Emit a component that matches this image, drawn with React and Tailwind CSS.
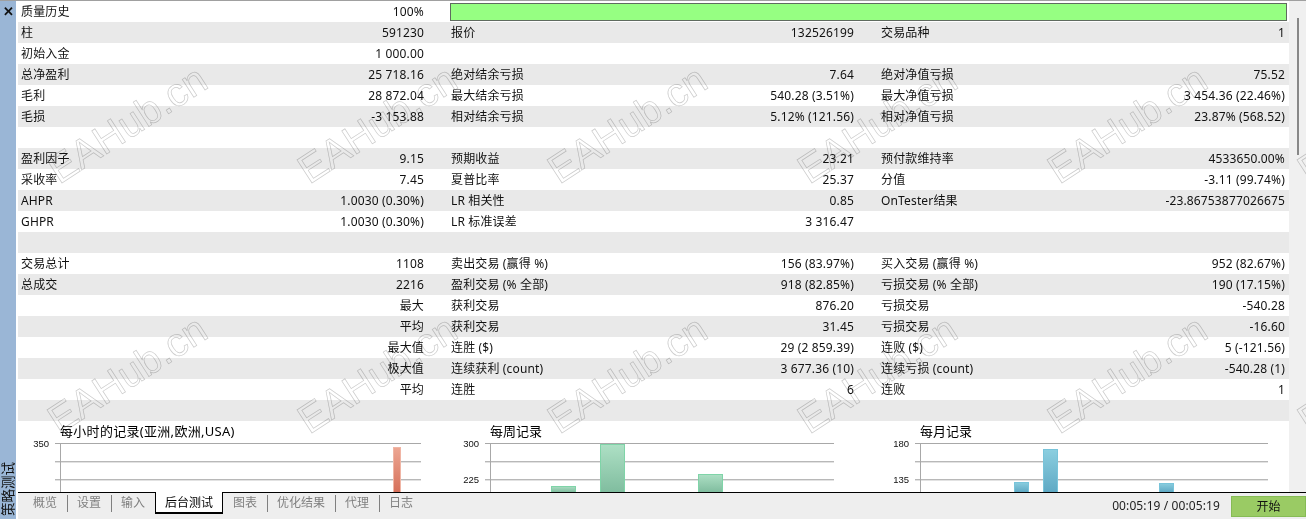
import React from "react";

const FONT = "font-['Noto_Sans','Noto_Sans_CJK_SC',sans-serif]";

// [label, value, label, value, label, value]
const rows = [
  ["质量历史", "100%", "__bar__", "", "", ""],
  ["柱", "591230", "报价", "132526199", "交易品种", "1"],
  ["初始入金", "1 000.00", "", "", "", ""],
  ["总净盈利", "25 718.16", "绝对结余亏损", "7.64", "绝对净值亏损", "75.52"],
  ["毛利", "28 872.04", "最大结余亏损", "540.28 (3.51%)", "最大净值亏损", "3 454.36 (22.46%)"],
  ["毛损", "-3 153.88", "相对结余亏损", "5.12% (121.56)", "相对净值亏损", "23.87% (568.52)"],
  ["", "", "", "", "", ""],
  ["盈利因子", "9.15", "预期收益", "23.21", "预付款维持率", "4533650.00%"],
  ["采收率", "7.45", "夏普比率", "25.37", "分值", "-3.11 (99.74%)"],
  ["AHPR", "1.0030 (0.30%)", "LR 相关性", "0.85", "OnTester结果", "-23.86753877026675"],
  ["GHPR", "1.0030 (0.30%)", "LR 标准误差", "3 316.47", "", ""],
  ["", "", "", "", "", ""],
  ["交易总计", "1108", "卖出交易 (赢得 %)", "156 (83.97%)", "买入交易 (赢得 %)", "952 (82.67%)"],
  ["总成交", "2216", "盈利交易 (% 全部)", "918 (82.85%)", "亏损交易 (% 全部)", "190 (17.15%)"],
  ["", "最大", "获利交易", "876.20", "亏损交易", "-540.28"],
  ["", "平均", "获利交易", "31.45", "亏损交易", "-16.60"],
  ["", "最大值", "连胜 ($)", "29 (2 859.39)", "连败 ($)", "5 (-121.56)"],
  ["", "极大值", "连续获利 (count)", "3 677.36 (10)", "连续亏损 (count)", "-540.28 (1)"],
  ["", "平均", "连胜", "6", "连败", "1"],
  ["", "", "", "", "", ""],
];

const charts = [
  {
    id: "hour",
    title: "每小时的记录(亚洲,欧洲,USA)",
    titleClass: "tracking-[0.3px]",
    labels: ["350", ""],
    lineEnd: 403,
    from: "#eda793",
    to: "#d6705a",
    edge: "#f0b5a5",
    bars: [[375, 6, 8]],
  },
  {
    id: "week",
    title: "每周记录",
    titleClass: "",
    labels: ["300", "225"],
    lineEnd: 386,
    from: "#aee0c5",
    to: "#80bd9f",
    edge: "#7fd4a8",
    bars: [
      [103, 45, 25],
      [152, 3, 25],
      [250, 33, 25],
    ],
  },
  {
    id: "month",
    title: "每月记录",
    titleClass: "",
    labels: ["180", "135"],
    lineEnd: 390,
    from: "#8ccfe0",
    to: "#5fa9c4",
    edge: "#78c4da",
    bars: [
      [136, 41, 15],
      [165, 8, 15],
      [281, 42, 15],
    ],
  },
];

const tabs = ["概览", "设置", "输入", "后台测试", "图表", "优化结果", "代理", "日志"];

function Row({ row, index }) {
  const bg = index % 2 === 1 ? "bg-[#e9e9e9]" : "bg-white";
  return (
    <div className={`grid grid-cols-[430px_430px_411px] h-[21px] items-center text-[12px] leading-[21px] tracking-[0.15px] text-[#111] ${bg}`}>
      <div className="flex justify-between pl-[3px] pr-[24px]">
        <span>{row[0]}</span>
        <span>{row[1]}</span>
      </div>
      {row[2] === "__bar__" ? (
        <div className="col-span-2 pl-[2px] pr-[2px]">
          <div className="h-[18px] bg-[#96ff82] border border-[#5f6b5f]" />
        </div>
      ) : (
        <>
          <div className="flex justify-between pl-[3px] pr-[24px]">
            <span>{row[2]}</span>
            <span>{row[3]}</span>
          </div>
          <div className="flex justify-between pl-[3px] pr-[4px]">
            <span>{row[4]}</span>
            <span>{row[5]}</span>
          </div>
        </>
      )}
    </div>
  );
}

function Chart({ chart }) {
  const { id, title, titleClass, labels, lineEnd, from, to, edge, bars } = chart;
  return (
    <div className="h-[71px]">
      <div className={`h-[20px] pl-[42px] text-[13px] leading-[20px] text-black ${titleClass}`}>{title}</div>
      <svg width="430" height="51" className="block overflow-visible">
        <defs>
          <linearGradient id={id} x1="0" y1="0" x2="0" y2="1">
            <stop offset="0" stopColor={from} />
            <stop offset="1" stopColor={to} />
          </linearGradient>
        </defs>
        <rect x="37" y="2" width={lineEnd - 37} height="1" fill="#a8a8a8" />
        <rect x="37" y="20" width={lineEnd - 37} height="1" fill="#b8b8b8" />
        <rect x="37" y="21" width={lineEnd - 37} height="1" fill="#e2e2e2" />
        <rect x="37" y="38" width={lineEnd - 37} height="1" fill="#b8b8b8" />
        <rect x="37" y="39" width={lineEnd - 37} height="1" fill="#e2e2e2" />
        <rect x="42" y="2" width="1" height="49" fill="#a8a8a8" />
        {bars.map(([x, y, w]) => (
          <g key={x}>
            <rect x={x} y={y} width={w} height={51 - y} fill={`url(#${id})`} />
            <rect x={x} y={y} width={w} height="1" fill={edge} />
            <rect x={x} y={y} width="1" height={51 - y} fill={edge} />
            <rect x={x + w - 1} y={y} width="1" height={51 - y} fill={edge} />
          </g>
        ))}
        <text x="31" y="6" textAnchor="end" fontSize="9.5" fontFamily="Liberation Sans, sans-serif" fill="#111">
          {labels[0]}
        </text>
        <text x="31" y="42" textAnchor="end" fontSize="9.5" fontFamily="Liberation Sans, sans-serif" fill="#111">
          {labels[1]}
        </text>
      </svg>
    </div>
  );
}

function TabBar() {
  return (
    <div className="flex items-start h-[27px] bg-[#eeeeee] border-t border-black text-[12px] text-[#808080]">
      <div className="flex items-start pl-[5px] h-[22px]">
        {tabs.map((tab, i) => {
          if (tab === "后台测试") {
            return (
              <div
                key={tab}
                className="h-[22px] w-[68px] -mt-px pt-px bg-white border-x border-b-2 border-black border-t-0 text-black text-center leading-[20px]"
              >
                {tab}
              </div>
            );
          }
          const noSep = i === 2 || i === tabs.length - 1;
          return (
            <div key={tab} className="flex items-center h-[20px]">
              <span className="px-[10px] leading-[20px] whitespace-nowrap">{tab}</span>
              {!noSep && <span className="w-px -mr-px h-[17px] bg-[#808080]" />}
            </div>
          );
        })}
      </div>
      <div className="ml-auto flex items-center h-[26px]">
        <span className="text-[#222] tracking-[0.1px] mr-[11px]">00:05:19 / 00:05:19</span>
        <button className="w-[75px] h-[21px] bg-[#9acb64] border border-[#86bb55] text-[#111] leading-[19px]">
          开始
        </button>
      </div>
    </div>
  );
}

export default function App() {
  return (
    <div className={`relative flex w-[1306px] h-[519px] overflow-hidden bg-white border-t border-[#a0a0a0] ${FONT}`}>
      <div className="flex flex-col justify-between items-center w-[16px] bg-[#9ab6d6] text-[#111]">
        <span className="mt-[2px] text-[13px] font-bold leading-[16px]">✕</span>
        <span className="[writing-mode:vertical-rl] [text-orientation:sideways] rotate-180 text-[13.5px] leading-[16px] whitespace-nowrap mb-[3px]">
          策略测试
        </span>
      </div>
      <div className="flex flex-col ml-[2px] w-[1288px]">
        <div className="flex h-[491px]">
          <div className="w-[1271px]">
            {rows.map((row, i) => (
              <Row key={i} row={row} index={i} />
            ))}
            <div className="grid grid-cols-[430px_430px_411px]">
              {charts.map((c) => (
                <Chart key={c.id} chart={c} />
              ))}
            </div>
          </div>
          <div className="relative w-[17px] bg-[#f0f0f0]">
            <div className="absolute left-[8px] top-[17px] w-[2px] h-[137px] bg-[#888888]" />
          </div>
        </div>
        <TabBar />
      </div>
      {/* watermark */}
      <div className="absolute left-[2px] top-[-2px] grid grid-cols-[repeat(6,250px)] grid-rows-[250px_250px] pointer-events-none mix-blend-multiply">
        {Array.from({ length: 12 }).map((_, i) => (
          <div key={i} className="flex items-center justify-center">
            <span className="-rotate-[33deg] font-['Liberation_Sans',sans-serif] text-[40px] text-transparent [-webkit-text-stroke:0.7px_#cccccc] whitespace-nowrap">
              EAHub.cn
            </span>
          </div>
        ))}
      </div>
    </div>
  );
}
